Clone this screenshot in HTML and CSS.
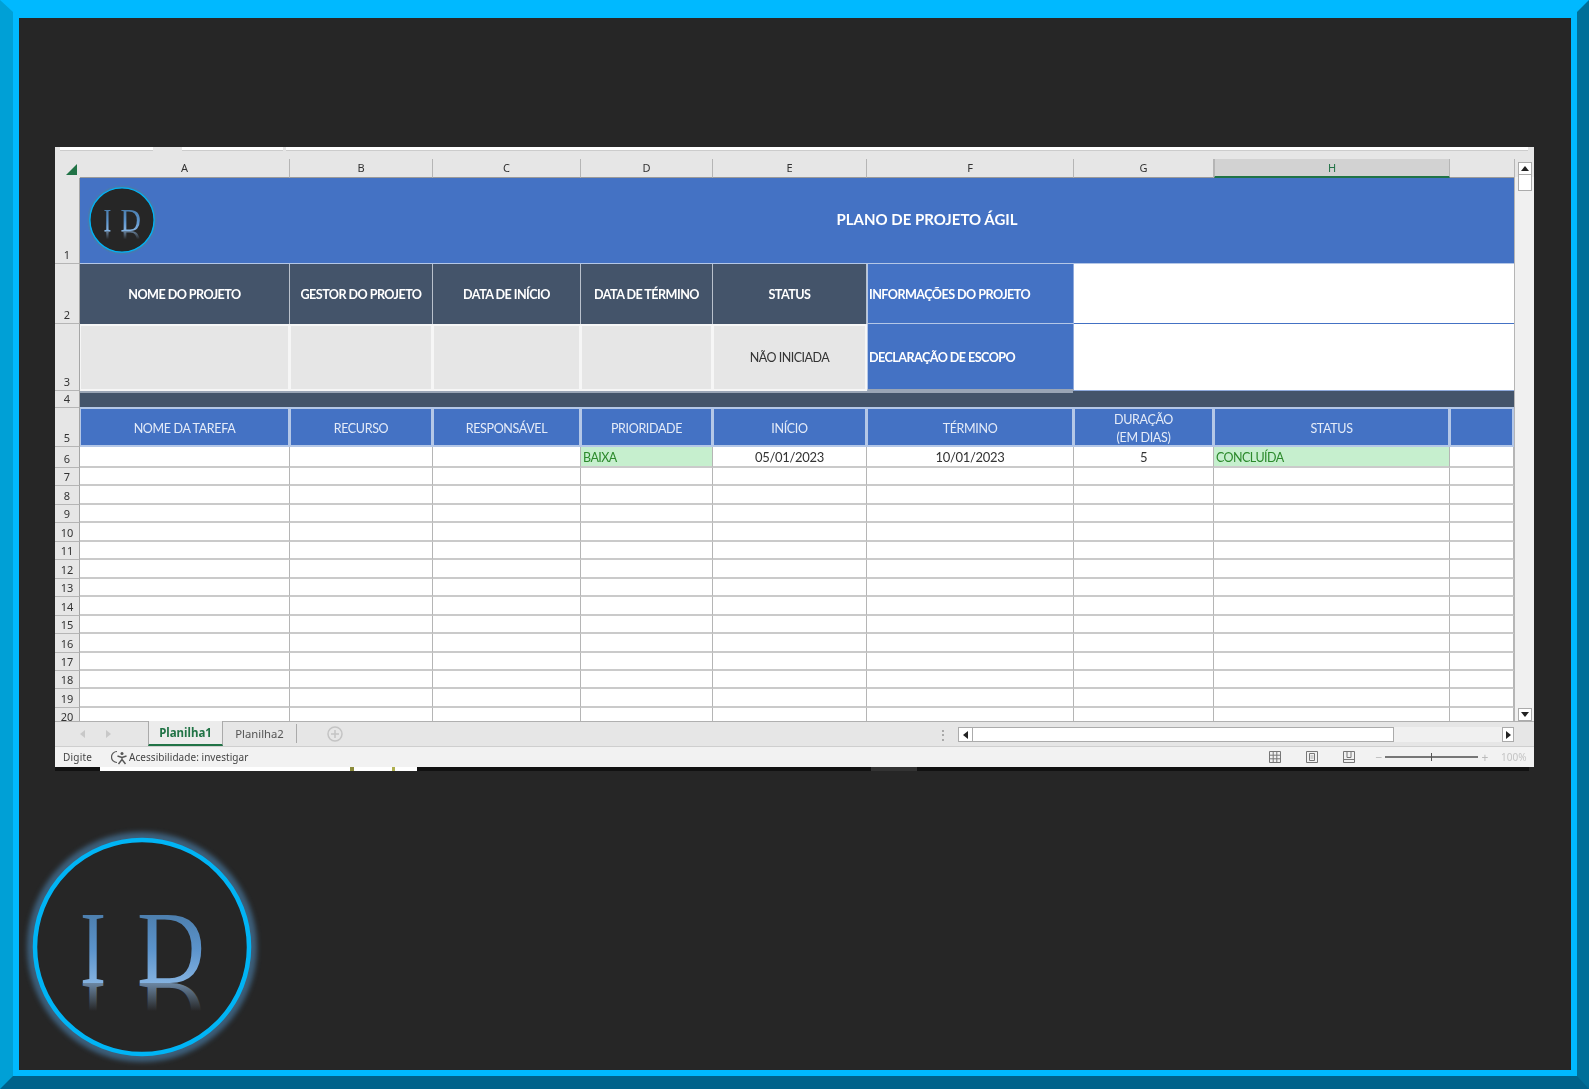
FILE: index.html
```html
<!DOCTYPE html>
<html lang="pt-BR">
<head>
<meta charset="utf-8">
<title>Plano de Projeto Ágil</title>
<link rel="stylesheet" href="styles.css">
</head>
<body>
<svg class="defs" width="0" height="0" aria-hidden="true">
  <defs>
    <linearGradient id="letter" gradientUnits="userSpaceOnUse" x1="0" y1="88" x2="0" y2="156">
      <stop offset="0" stop-color="#4d7fae"/>
      <stop offset="0.5" stop-color="#5b93cb"/>
      <stop offset="1" stop-color="#84b2e0"/>
    </linearGradient>
    <linearGradient id="mirror" gradientUnits="userSpaceOnUse" x1="0" y1="156" x2="0" y2="128">
      <stop offset="0" stop-color="#7d9fc2" stop-opacity="0.8"/>
      <stop offset="1" stop-color="#7d9fc2" stop-opacity="0"/>
    </linearGradient>
    <filter id="glow" x="-20%" y="-20%" width="140%" height="140%">
      <feGaussianBlur stdDeviation="2.5"/>
    </filter>
    <clipPath id="mirrorclip"><rect x="0" y="156" width="240" height="28"/></clipPath>
    <symbol id="logo" viewBox="0 0 240 240">
      <circle cx="120" cy="120" r="108" fill="none" stroke="#4a7ea8" stroke-width="14" opacity="0.65" filter="url(#glow)"/>
      <circle cx="120" cy="120" r="107" fill="#262626" stroke="#00b4f5" stroke-width="4.5"/>
      <text class="logo-letter" x="58" y="156" fill="url(#letter)" textLength="26" lengthAdjust="spacingAndGlyphs">I</text>
      <text class="logo-letter" x="115" y="156" fill="url(#letter)" textLength="68" lengthAdjust="spacingAndGlyphs">D</text>
      <g clip-path="url(#mirrorclip)">
        <text class="logo-letter" x="58" y="156" transform="translate(0 312) scale(1 -1)" fill="url(#mirror)" textLength="26" lengthAdjust="spacingAndGlyphs" aria-hidden="true">I</text>
        <text class="logo-letter" x="115" y="156" transform="translate(0 312) scale(1 -1)" fill="url(#mirror)" textLength="68" lengthAdjust="spacingAndGlyphs" aria-hidden="true">D</text>
      </g>
    </symbol>
  </defs>
</svg>

<div class="bevel">
  <div class="canvas">
    <div class="window">
      <div class="ribbon-edge">
        <span class="edge-a"></span><span class="edge-b"></span><span class="edge-c"></span>
      </div>
      <div class="workarea">
        <div class="sheet">
          <div class="corner"><span class="corner-mark"></span></div>
          <div class="ch">A</div><div class="ch">B</div><div class="ch">C</div><div class="ch">D</div><div class="ch">E</div><div class="ch">F</div><div class="ch">G</div><div class="ch selected">H</div><div class="ch blank"></div>

          <div class="rh">1</div>
          <div class="title-cell">
            <svg class="logo-small" viewBox="0 0 240 240"><use href="#logo"/></svg>
            <div class="title">PLANO DE PROJETO ÁGIL</div>
          </div>

          <div class="rh">2</div>
          <div class="head-dark">NOME DO PROJETO</div><div class="head-dark">GESTOR DO PROJETO</div><div class="head-dark">DATA DE INÍCIO</div><div class="head-dark">DATA DE TÉRMINO</div><div class="head-dark">STATUS</div>
          <div class="head-info">INFORMAÇÕES DO PROJETO</div><div class="info-value"></div>

          <div class="rh">3</div>
          <div class="field"></div><div class="field"></div><div class="field"></div><div class="field"></div><div class="field">NÃO INICIADA</div>
          <div class="head-info tall">DECLARAÇÃO DE ESCOPO</div><div class="info-value tall"></div>

          <div class="rh">4</div>
          <div class="band"></div>

          <div class="rh">5</div>
          <div class="th">NOME DA TAREFA</div><div class="th">RECURSO</div><div class="th">RESPONSÁVEL</div><div class="th">PRIORIDADE</div><div class="th">INÍCIO</div><div class="th">TÉRMINO</div><div class="th">DURAÇÃO<br>(EM DIAS)</div><div class="th">STATUS</div><div class="th"></div>

          <div class="rh">6</div>
          <div class="c"></div><div class="c"></div><div class="c"></div><div class="c good">BAIXA</div><div class="c">05/01/2023</div><div class="c">10/01/2023</div><div class="c">5</div><div class="c good">CONCLUÍDA</div><div class="c"></div>

          <div class="rh">7</div><div class="c"></div><div class="c"></div><div class="c"></div><div class="c"></div><div class="c"></div><div class="c"></div><div class="c"></div><div class="c"></div><div class="c"></div>
          <div class="rh">8</div><div class="c"></div><div class="c"></div><div class="c"></div><div class="c"></div><div class="c"></div><div class="c"></div><div class="c"></div><div class="c"></div><div class="c"></div>
          <div class="rh">9</div><div class="c"></div><div class="c"></div><div class="c"></div><div class="c"></div><div class="c"></div><div class="c"></div><div class="c"></div><div class="c"></div><div class="c"></div>
          <div class="rh">10</div><div class="c"></div><div class="c"></div><div class="c"></div><div class="c"></div><div class="c"></div><div class="c"></div><div class="c"></div><div class="c"></div><div class="c"></div>
          <div class="rh">11</div><div class="c"></div><div class="c"></div><div class="c"></div><div class="c"></div><div class="c"></div><div class="c"></div><div class="c"></div><div class="c"></div><div class="c"></div>
          <div class="rh">12</div><div class="c"></div><div class="c"></div><div class="c"></div><div class="c"></div><div class="c"></div><div class="c"></div><div class="c"></div><div class="c"></div><div class="c"></div>
          <div class="rh">13</div><div class="c"></div><div class="c"></div><div class="c"></div><div class="c"></div><div class="c"></div><div class="c"></div><div class="c"></div><div class="c"></div><div class="c"></div>
          <div class="rh">14</div><div class="c"></div><div class="c"></div><div class="c"></div><div class="c"></div><div class="c"></div><div class="c"></div><div class="c"></div><div class="c"></div><div class="c"></div>
          <div class="rh">15</div><div class="c"></div><div class="c"></div><div class="c"></div><div class="c"></div><div class="c"></div><div class="c"></div><div class="c"></div><div class="c"></div><div class="c"></div>
          <div class="rh">16</div><div class="c"></div><div class="c"></div><div class="c"></div><div class="c"></div><div class="c"></div><div class="c"></div><div class="c"></div><div class="c"></div><div class="c"></div>
          <div class="rh">17</div><div class="c"></div><div class="c"></div><div class="c"></div><div class="c"></div><div class="c"></div><div class="c"></div><div class="c"></div><div class="c"></div><div class="c"></div>
          <div class="rh">18</div><div class="c"></div><div class="c"></div><div class="c"></div><div class="c"></div><div class="c"></div><div class="c"></div><div class="c"></div><div class="c"></div><div class="c"></div>
          <div class="rh">19</div><div class="c"></div><div class="c"></div><div class="c"></div><div class="c"></div><div class="c"></div><div class="c"></div><div class="c"></div><div class="c"></div><div class="c"></div>
          <div class="rh">20</div><div class="c"></div><div class="c"></div><div class="c"></div><div class="c"></div><div class="c"></div><div class="c"></div><div class="c"></div><div class="c"></div><div class="c"></div>
        </div>
        <div class="vscroll">
          <div class="sb-btn"><svg width="8" height="5" viewBox="0 0 8 5"><path d="M0 5L4 0L8 5Z"/></svg></div>
          <div class="v-thumb"></div>
          <div class="sb-track"></div>
          <div class="sb-btn"><svg width="8" height="5" viewBox="0 0 8 5"><path d="M0 0L4 5L8 0Z"/></svg></div>
        </div>
      </div>
      <div class="tabbar">
        <div class="nav">
          <svg width="5" height="8" viewBox="0 0 5 8"><path d="M5 0L0 4L5 8Z"/></svg>
          <svg width="5" height="8" viewBox="0 0 5 8"><path d="M0 0L5 4L0 8Z"/></svg>
        </div>
        <div class="tab active">Planilha1</div>
        <div class="tab">Planilha2</div>
        <svg class="add-sheet" width="16" height="16" viewBox="0 0 16 16"><circle cx="8" cy="8" r="7" fill="none" stroke="#c4c4c4" stroke-width="1.5"/><path d="M8 4V12M4 8H12" stroke="#c4c4c4" stroke-width="1.5"/></svg>
        <div class="tab-dots">⋮</div>
        <div class="hscroll">
          <div class="h-btn"><svg width="5" height="8" viewBox="0 0 5 8"><path d="M5 0L0 4L5 8Z"/></svg></div>
          <div class="h-thumb"></div>
          <div class="h-track"></div>
          <div class="h-btn end"><svg width="5" height="8" viewBox="0 0 5 8"><path d="M0 0L5 4L0 8Z"/></svg></div>
        </div>
      </div>
      <div class="statusbar">
        <span class="mode">Digite</span>
        <svg class="a11y" width="17" height="15" viewBox="0 0 17 15" fill="none" stroke="#555" stroke-width="1.2"><path d="M6 1.5A5.5 5.5 0 1 0 6 12.5"/><path d="M6.5 6L11 7.5L15.5 6M11 7.5V9.5M7.5 14L11 9.5L14.5 14" stroke-width="1.4"/><circle cx="11" cy="3.5" r="1.5" fill="#555" stroke="none"/></svg>
        <span>Acessibilidade: investigar</span>
        <div class="status-right">
          <svg class="view" width="12" height="12" viewBox="0 0 12 12" fill="none" stroke="#777"><path d="M.5 .5H11.5V11.5H.5ZM4.2 .5V11.5M7.8 .5V11.5M.5 4.2H11.5M.5 7.8H11.5"/></svg>
          <svg class="view" width="12" height="12" viewBox="0 0 12 12" fill="none" stroke="#777"><path d="M.5 .5H11.5V11.5H.5ZM3.5 2.5H8.5V9.5H3.5Z"/><path d="M4.5 5H7.5M4.5 7H7.5" stroke="#aaa"/></svg>
          <svg class="view" width="12" height="12" viewBox="0 0 12 12" fill="none" stroke="#777"><path d="M.5 .5H11.5V11.5H.5ZM4 .5V6.5H8V.5M.5 8.5H11.5"/></svg>
          <span class="zoom-sign">−</span>
          <div class="zoom-track"><span class="zoom-tick"></span></div>
          <span class="zoom-sign plus">+</span>
          <span class="zoom-value">100%</span>
        </div>
      </div>
    </div>
    <div class="under"><span class="under-a"></span><span class="under-b"></span><span class="under-c"></span><span class="under-d"></span><span class="under-e"></span></div>
    <svg class="logo-large" width="240" height="240" viewBox="0 0 240 240"><use href="#logo"/></svg>
  </div>
</div>
</body>
</html>
```
FILE: styles.css
```css
* { box-sizing: border-box; }
html, body { margin: 0; padding: 0; height: 100%; overflow: hidden; background: #262626; }
.defs { position: absolute; }

.bevel {
  width: 1589px;
  height: 1089px;
  border-style: solid;
  border-width: 12px 12px 13px 13px;
  border-color: #00b9ff #006f99 #00628a #00a0d6;
}
.canvas {
  height: 100%;
  background: #262626;
  border: 6px solid #00b9ff;
  padding: 129px 0 0 36px;
  overflow: hidden;
}

/* Excel window */
.window {
  width: 1479px;
  height: 620px;
  display: flex;
  flex-direction: column;
  background: #e6e6e6;
  font-family: "Noto Sans", sans-serif;
  font-size: 10px;
  color: #444;
  filter: blur(0.35px);
}
.ribbon-edge { height: 12px; flex: none; display: flex; align-items: flex-start; }
.ribbon-edge span { display: block; height: 4px; background: #fff; border-bottom: 1px solid #ccc; }
.edge-a { width: 93px; margin-left: 5px; }
.edge-b { width: 101px; margin-left: 29px; }
.edge-c { width: 1242px; margin-left: 3px; }

.workarea { flex: 1; min-height: 0; display: flex; }
.sheet {
  width: 1460px;
  flex: none;
  display: grid;
  grid-template-columns: 25px 210px 143px 148px 132px 154px 207px 140px 236px 64px;
  grid-template-rows: 19px 86px 60px 67px 17px 39px 21px;
  grid-auto-rows: 18.46px;
  overflow: hidden;
  background: #fff;
  border-right: 1px solid #b5b5b5;
}
.corner { background: #e6e6e6; display: flex; align-items: center; justify-content: flex-end; padding: 2px 3px 0 0; }
.corner-mark { width: 11px; height: 11px; background: #217346; clip-path: polygon(100% 0, 100% 100%, 0 100%); }
.ch {
  background: #e6e6e6;
  border-right: 1px solid #b5b5b5;
  border-bottom: 1px solid #9a9a9a;
  text-align: center;
  font-size: 11px;
  line-height: 18px;
  color: #333;
}
.ch.selected { background: #d2d2d2; color: #217346; border-bottom: 2px solid #217346; border-right-color: #b5b5b5; border-left: 1px solid #b5b5b5; }
.ch.blank { border-right: 0; }
.rh {
  background: #e6e6e6;
  border-bottom: 1px solid #b5b5b5;
  border-right: 1px solid #a6a6a6;
  display: flex;
  align-items: flex-end;
  justify-content: center;
  padding-bottom: 1px;
  font-size: 11px;
  line-height: 15px;
  color: #333;
}

.title-cell {
  grid-column: 2 / -1;
  background: #4472c4;
  display: flex;
  align-items: center;
  padding: 0 0 1px 6px;
  border-bottom: 1px solid #b4c7e7;
}
.logo-small { width: 72px; height: 72px; flex: none; }
.logo-letter { font-family: "Liberation Serif", serif; font-size: 103px; }
.title {
  flex: 1;
  padding: 0 0 2px 182px;
  text-align: center;
  font-family: Lato, sans-serif;
  font-weight: 700;
  font-size: 15px;
  color: #fff;
}

.head-dark, .head-info, .field, .th, .c {
  font-family: Lato, sans-serif;
  font-size: 12.6px;
  letter-spacing: -0.55px;
  display: flex;
  align-items: center;
  justify-content: center;
  text-align: center;
}
.head-dark {
  background: #44546a;
  color: #fff;
  font-weight: 700;
  border-right: 1px solid #b9c1cc;
}
.head-info {
  background: #4472c4;
  color: #fff;
  font-weight: 700;
  justify-content: flex-start;
  padding: 1px 0 0 1px;
  border-right: 1px solid #8faadc;
  border-bottom: 1px solid #b4c7e7;
  border-left: 1px solid #b4c7e7;
}
.head-info.tall { border-bottom: 2px solid #9aa5b5; }
.info-value {
  grid-column: 8 / -1;
  background: #fff;
  border-bottom: 1px solid #4472c4;
}
.info-value.tall { border-bottom-color: #8faadc; }
.field {
  background: #e6e6e6;
  color: #333;
  border: 2px solid #f6f6f6;
  border-left-width: 1px;
  font-size: 12.5px;
  letter-spacing: -0.5px;
}
.band {
  grid-column: 2 / -1;
  background: linear-gradient(90deg, #9aa5b5 993px, #44546a 993px) top / 100% 2px no-repeat, #44546a;
  border-bottom: 1px solid #b4c7e7;
}
.th {
  background: #4472c4;
  color: #e4ebf8;
  font-size: 12.5px;
  letter-spacing: -0.35px;
  line-height: 18px;
  padding-top: 3px;
  border: 1px solid #b4c7e7;
  border-right: 2px solid #b4c7e7;
  border-bottom: 2px solid #b4c7e7;
}
.c {
  background: #fff;
  color: #333;
  font-size: 13px;
  letter-spacing: -0.3px;
  padding-top: 1px;
  border-right: 1px solid #b5b5b5;
  border-bottom: 2px solid #cacaca;
}
.c.good {
  background: #c6efce;
  color: #2c8a2c;
  font-size: 12.5px;
  letter-spacing: -0.55px;
  justify-content: flex-start;
  padding-left: 2px;
}

/* vertical scrollbar */
.vscroll {
  flex: 1;
  display: flex;
  flex-direction: column;
  align-items: center;
  background: linear-gradient(#e6e6e6 18px, #f0f0f0 18px);
  padding: 3px 0 0;
}
.sb-btn {
  width: 14px;
  height: 13px;
  flex: none;
  background: #fff;
  border: 1px solid #ababab;
  display: flex;
  align-items: center;
  justify-content: center;
}
.sb-btn svg, .h-btn svg { fill: #222; }
.v-thumb { width: 14px; height: 16px; flex: none; background: #fff; border: 1px solid #ababab; border-top: 0; }
.sb-track { flex: 1; }

/* sheet tabs */
.tabbar {
  height: 25px;
  flex: none;
  display: flex;
  align-items: stretch;
  background: #e6e6e6;
  border-top: 1px solid #b0b0b0;
  font-size: 11.3px;
}
.nav { width: 93px; display: flex; align-items: center; padding-left: 25px; gap: 21px; fill: #c8c8c8; }
.tab { display: flex; align-items: center; justify-content: center; width: 75px; color: #555; }
.tab.active {
  margin-top: -1px;
  color: #217346;
  font-weight: 700;
  font-size: 11.5px;
  background: #ececec;
  border-left: 1px solid #aaa;
  border-right: 1px solid #aaa;
  border-bottom: 2px solid #217346;
}
.tab:not(.active) { margin: 2px 0 3px; width: 74px; border-right: 1px solid #aaa; }
.add-sheet { align-self: center; margin-left: 30px; flex: none; }
.tab-dots { width: 16px; margin-left: 592px; display: flex; align-items: center; justify-content: center; color: #888; font-size: 12px; }
.hscroll { width: 556px; margin: 5px 0 4px 7px; display: flex; }
.h-btn { width: 15px; background: #fff; border: 1px solid #ababab; display: flex; align-items: center; justify-content: center; }
.h-btn.end { width: 12px; }
.h-thumb { width: 421px; background: #fff; border: 1px solid #ababab; border-left: 0; }
.h-track { width: 108px; background: #f0f0f0; }

/* status bar */
.statusbar {
  height: 21px;
  flex: none;
  display: flex;
  align-items: center;
  background: #f2f2f2;
  border-top: 1px solid #cfcfcf;
  padding-left: 8px;
  font-size: 10px;
  letter-spacing: 0.05px;
  color: #444;
}
.mode { width: 48px; letter-spacing: 0.2px; }
.a11y { margin-right: 1px; flex: none; }
.status-right { margin-left: auto; display: flex; align-items: center; padding-right: 7px; color: #bbb; }
.view { margin-right: 25px; flex: none; }
.view:nth-child(3) { margin-right: 18px; }
.zoom-sign { width: 12px; text-align: center; color: #bbb; font-size: 12px; }
.zoom-sign.plus { width: 14px; }
.zoom-track { width: 93px; height: 2px; background: #777; position: relative; }
.zoom-tick { position: absolute; left: 46px; top: -3px; width: 1px; height: 8px; background: #555; }
.zoom-value { margin-left: 9px; width: 26px; color: #c4c4c4; letter-spacing: 0; }

/* bit of the window behind */
.under { width: 1474px; height: 4px; display: flex; }
.under span { display: block; height: 100%; }
.under-a { width: 45px; background: #111; }
.under-b { width: 317px; background: linear-gradient(90deg, #fff 0 250px, #8a8a3a 250px 254px, #fff 254px 292px, #b0b050 292px 295px, #fff 295px); }
.under-c { width: 454px; background: #111; }
.under-d { width: 46px; background: #333; }
.under-e { flex: 1; background: #111; }

.logo-large { display: block; margin: 56px 0 0 -33px; overflow: visible; }
```
